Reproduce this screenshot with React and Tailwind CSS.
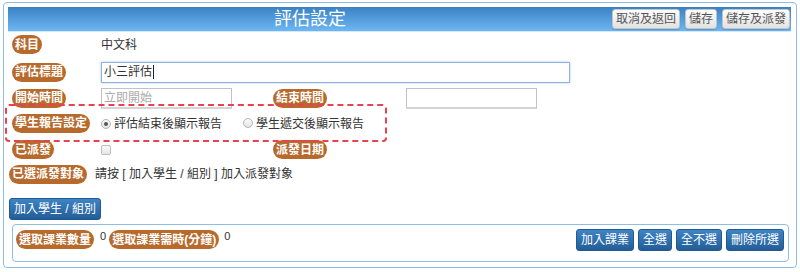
import React from "react";

const FONT = { fontFamily: "'Liberation Sans', 'Noto Sans CJK TC', sans-serif" };

function Pill({ children, className = "" }) {
  return (
    <span
      className={
        "inline-flex items-center h-[19px] px-[3px] rounded-full bg-[#b86a2d] text-white text-[12px] font-bold leading-none whitespace-nowrap " +
        className
      }
    >
      {children}
    </span>
  );
}

function GrayBtn({ children }) {
  return (
    <button className="h-[20px] px-[3px] border border-[#c4c4c4] rounded-[3px] bg-gradient-to-b from-[#fdfdfd] to-[#e2e2e2] text-[#555] text-[12px] leading-none whitespace-nowrap shadow-[0_1px_1px_rgba(0,0,0,0.15)]">
      {children}
    </button>
  );
}

function BlueBtn({ children, className = "" }) {
  return (
    <button
      className={
        "h-[22px] px-[4px] border border-[#1f5a92] rounded-[3px] bg-gradient-to-b from-[#3f84c4] to-[#235d97] text-white text-[12px] leading-none whitespace-nowrap " +
        className
      }
    >
      {children}
    </button>
  );
}

function Radio({ checked }) {
  return (
    <span className="inline-flex items-center justify-center w-[10px] h-[10px] rounded-full border border-[#b5b5b5] bg-gradient-to-b from-[#fafafa] to-[#e4e4e4]">
      {checked && <span className="w-[4px] h-[4px] rounded-full bg-[#555]" />}
    </span>
  );
}

export default function App() {
  return (
    <div className="w-[800px] h-[272px] bg-white relative overflow-hidden text-[#333]" style={FONT}>
      <div className="ml-[3px] mt-[2px] w-[794px] h-[266px] border border-[#8fbde6] rounded-[4px] p-[4px] pr-[5px] box-border">
        {/* Header */}
        <div className="flex items-center h-[25px] border-b border-[#d6e8f8] bg-gradient-to-b from-[#3a82c3] to-[#6db7f3]">
          <div className="flex-1 text-center text-white text-[18px] leading-none">評估設定</div>
          <div className="flex gap-[5px] pr-[1px]">
            <GrayBtn>取消及返回</GrayBtn>
            <GrayBtn>儲存</GrayBtn>
            <GrayBtn>儲存及派發</GrayBtn>
          </div>
        </div>

        {/* Rows */}
        <div className="pl-[4px] text-[12px]">
          <div className="grid grid-cols-[89px_172px_133px_1fr] items-center h-[25px]">
            <div><Pill>科目</Pill></div>
            <div className="leading-none">中文科</div>
          </div>
          <div className="grid grid-cols-[89px_1fr] items-center h-[30px]">
            <div><Pill>評估標題</Pill></div>
            <div>
              <div className="w-[469px] h-[21px] border border-[#8fb2e4] shadow-[0_0_2px_rgba(80,140,220,0.5)] flex items-center pl-[2px] leading-none">
                小三評估<span className="inline-block w-[1px] h-[14px] bg-[#222] ml-[1px]" />
              </div>
            </div>
          </div>
          <div className="grid grid-cols-[89px_172px_133px_1fr] items-center h-[22px]">
            <div><Pill>開始時間</Pill></div>
            <div>
              <div className="w-[131px] h-[21px] border border-[#c2c2c2] border-b-2 border-b-[#d4d4d4] flex items-center pl-[2px] text-[#aaa] leading-none">
                立即開始
              </div>
            </div>
            <div><Pill>結束時間</Pill></div>
            <div>
              <div className="w-[131px] h-[21px] border border-[#c2c2c2] border-b-2 border-b-[#d4d4d4]" />
            </div>
          </div>
          <div className="grid grid-cols-[89px_1fr] items-center h-[28px]">
            <div><Pill>學生報告設定</Pill></div>
            <div className="flex items-center leading-none pt-[2px]">
              <Radio checked />
              <span className="ml-[3px]">評估結束後顯示報告</span>
              <span className="ml-[21px]"><Radio /></span>
              <span className="ml-[3px]">學生遞交後顯示報告</span>
            </div>
          </div>
          <div className="grid grid-cols-[89px_172px_133px_1fr] items-center h-[25px]">
            <div><Pill>已派發</Pill></div>
            <div className="flex items-center">
              <span className="w-[10px] h-[10px] rounded-[2px] border border-[#bcbcbc] bg-gradient-to-b from-[#fafafa] to-[#e6e6e6]" />
            </div>
            <div><Pill>派發日期</Pill></div>
            <div />
          </div>
          <div className="flex items-center h-[24px] -ml-[3px]">
            <Pill>已選派發對象</Pill>
            <span className="ml-[8px] leading-none">請按 [ 加入學生 / 組別 ] 加入派發對象</span>
          </div>
        </div>

        <div className="mt-[10px] pl-[1px]">
          <BlueBtn>加入學生 / 組別</BlueBtn>
        </div>

        <div className="ml-[4px] mt-[4px] w-[777px] h-[38px] border border-[#8fbde6] rounded-[4px] flex justify-between items-start pl-[3px] pr-[4px] pt-[4px] box-border">
          <div className="flex items-start mt-[1px] text-[11px]">
            <Pill>選取課業數量</Pill>
            <span className="ml-[6px] leading-[13px] mr-[3px]">0</span>
            <Pill>選取課業需時(分鐘)</Pill>
            <span className="ml-[5px] leading-[13px]">0</span>
          </div>
          <div className="flex gap-[4px]">
            <BlueBtn>加入課業</BlueBtn>
            <BlueBtn>全選</BlueBtn>
            <BlueBtn>全不選</BlueBtn>
            <BlueBtn>刪除所選</BlueBtn>
          </div>
        </div>
      </div>

      {/* red annotation */}
      <div className="absolute left-[5px] top-[104px] w-[382px] h-[38px] border-2 border-dashed border-[#e8414f] rounded-[4px] pointer-events-none" />
    </div>
  );
}
